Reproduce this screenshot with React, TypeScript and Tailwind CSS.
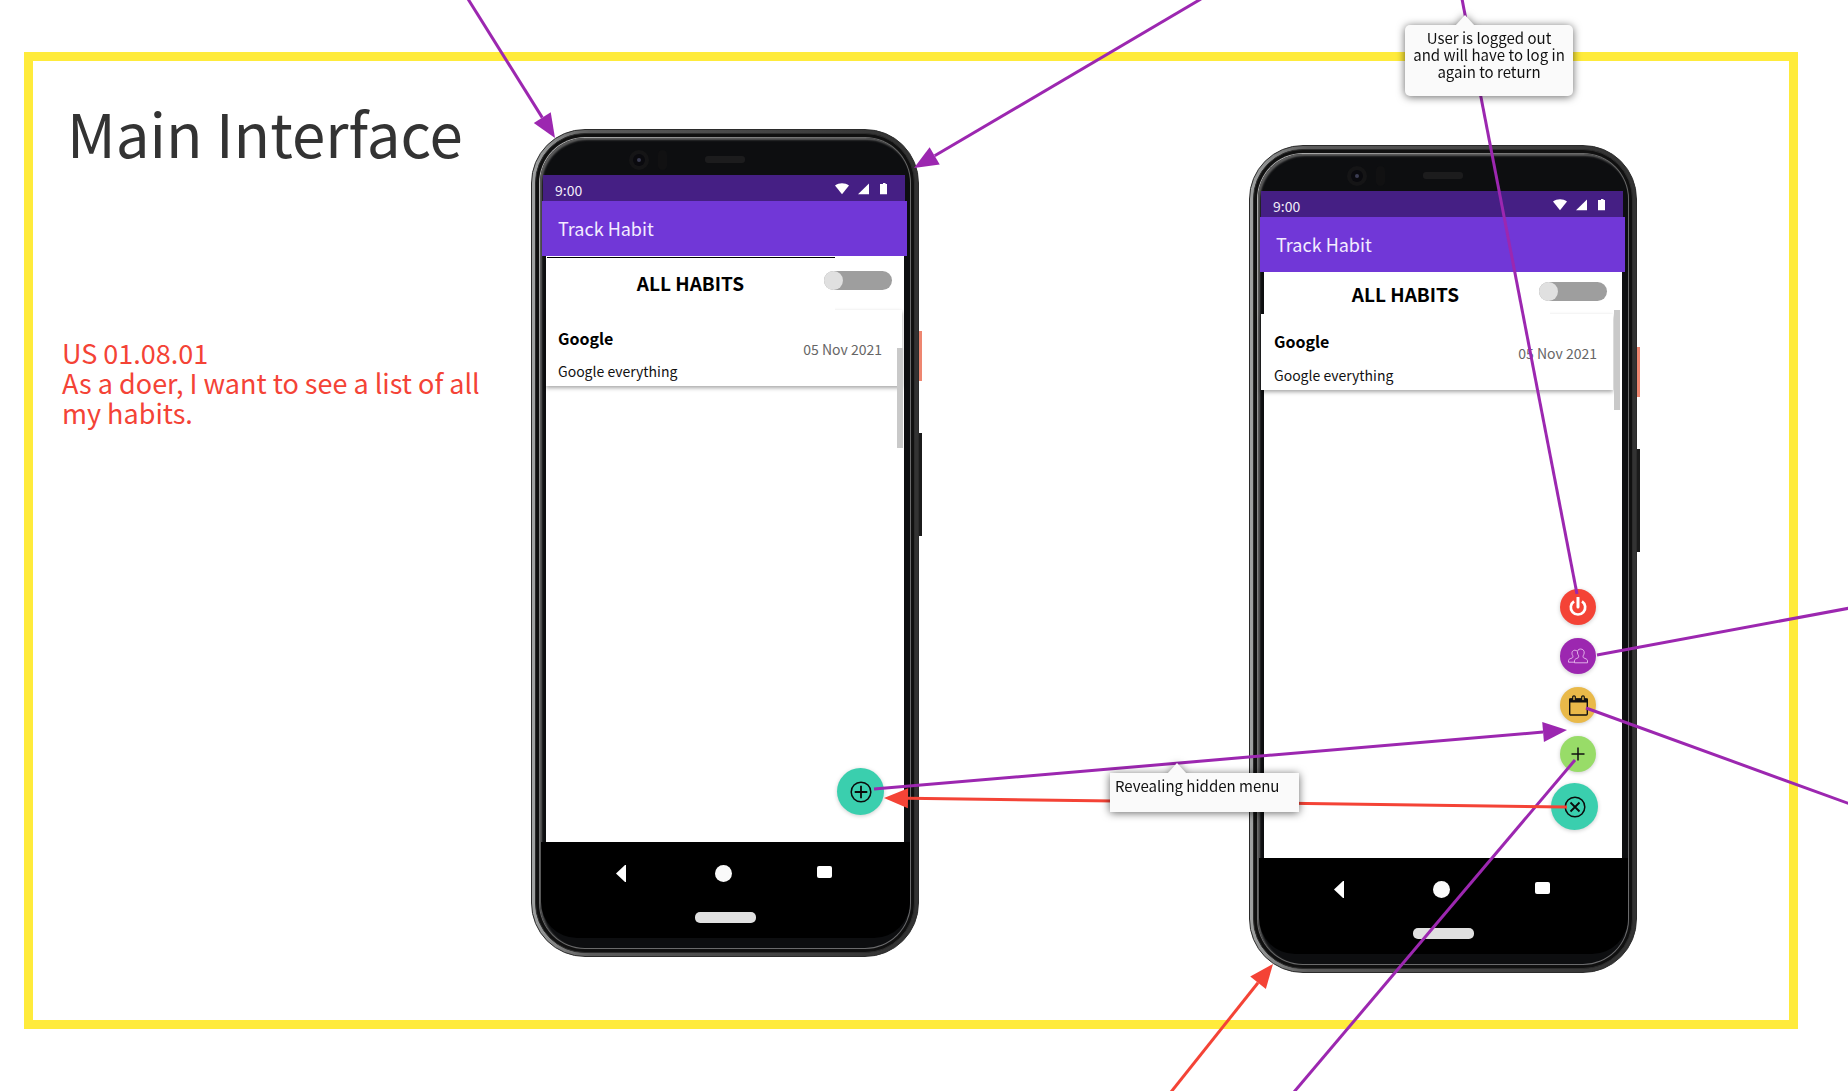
import type { ReactNode } from "react";

const PURPLE = "#9c27b0";
const RED = "#f44336";

type Point = [number, number];

type Connector = {
  from: Point;
  to: Point;
  color: string;
  head?: boolean;
};

const connectors: Connector[] = [
  { from: [468, -1], to: [555, 138], color: PURPLE, head: true },
  { from: [1201, -1], to: [914, 168], color: PURPLE, head: true },
  { from: [1462, -1], to: [1577, 594], color: PURPLE },
  { from: [1597, 655], to: [1850, 608], color: PURPLE },
  { from: [1586, 708], to: [1850, 804], color: PURPLE },
  { from: [1575, 760], to: [1294, 1092], color: PURPLE },
  { from: [874, 789], to: [1567, 730], color: PURPLE, head: true },
  { from: [1567, 807], to: [884, 798], color: RED, head: true },
  { from: [1171, 1092], to: [1273, 964], color: RED, head: true },
];

function ConnectorLine({ from, to, color, head }: Connector) {
  const dx = to[0] - from[0];
  const dy = to[1] - from[1];
  const length = Math.hypot(dx, dy);
  const ux = dx / length;
  const uy = dy / length;
  const base: Point = head ? [to[0] - ux * 24, to[1] - uy * 24] : to;
  const corners = [
    to,
    [base[0] - uy * 10, base[1] + ux * 10],
    [base[0] + uy * 10, base[1] - ux * 10],
  ];
  return (
    <g>
      <line x1={from[0]} y1={from[1]} x2={base[0]} y2={base[1]} stroke={color} strokeWidth="3" />
      {head && <polygon points={corners.map((c) => c.join(",")).join(" ")} fill={color} />}
    </g>
  );
}

function StatusIcons() {
  return (
    <svg className="mt-2 h-[12px] w-[53px]" viewBox="0 0 53 12" fill="#fff" aria-hidden="true">
      <path d="M0 2.6C4 -.5 10 -.5 14 2.6L7 11.3Z" />
      <path d="M34 .5V11.3H23Z" />
      <path d="M46.5 1H48V0h2.500v1H52v10.300h-7V1Z" />
    </svg>
  );
}

function Camera() {
  return (
    <div className="flex h-[37px] items-start pt-3 pl-[89px]" aria-hidden="true">
      <div className="flex size-5 items-center justify-center rounded-full bg-[#151516]">
        <div className="flex size-3 items-center justify-center rounded-full bg-[#0a0a0e]">
          <div className="size-1 rounded-full bg-[#3b3d52]" />
        </div>
      </div>
      <div className="ml-[9px] h-5 w-[9px] rounded-full bg-[#111112]" />
      <div className="mt-[6px] ml-[38px] h-[7px] w-10 rounded-[3px] bg-[#1c1c1d]" />
    </div>
  );
}

function NavBar() {
  return (
    <div className="ml-px h-[96px] rounded-b-[36px] bg-black pt-[23px]">
      <div className="mx-auto grid w-[306px] grid-cols-3 items-center justify-items-center pr-[4px]">
        <button type="button" aria-label="Back" className="mr-[3px] block">
          <svg className="h-[17px] w-[10px]" viewBox="0 0 10 17" fill="#fff">
            <path d="M10 0V17H9L0 8.500L9 0Z" />
          </svg>
        </button>
        <button type="button" aria-label="Home" className="size-[17px] rounded-full bg-[#fafafa]" />
        <button type="button" aria-label="Recent apps" className="mb-[3px] h-3 w-[15px] rounded-xs bg-white" />
      </div>
      <div className="mx-auto mt-[30px] h-[11px] w-[61px] rounded-[5px] bg-[#e0e0e0]" />
    </div>
  );
}

type PhoneProps = {
  id: string;
  place: string;
  headerClass: string;
  titleClass: string;
  toggleClass: string;
  cardClass: string;
  copyClass: string;
  scrollbarClass: string;
  hairline?: boolean;
  children: ReactNode;
};

function Phone({
  id,
  place,
  headerClass,
  titleClass,
  toggleClass,
  cardClass,
  copyClass,
  scrollbarClass,
  hairline,
  children,
}: PhoneProps) {
  return (
    <article className={`absolute isolate w-[388px] ${place}`}>
      <div className="absolute top-[202px] -right-[3px] h-[50px] w-2 bg-[#ee8670]" />
      <div className="absolute top-[304px] -right-[3px] h-[103px] w-2 bg-[#1b1b1b]" />
      <div className="relative rounded-[54px] border border-[#2b2b2b] bg-linear-to-r from-[#a0a2a2] via-[#5c5c5c] via-15% to-[#333] to-95% p-[3px]">
        <div className="rounded-[50px] border border-[#2c2c2c] bg-[#101010] p-[3px]">
          <div className="rounded-[46px] bg-linear-to-br from-[#b5b5b5] via-[#6a6a6a] via-40% to-[#6b6b6d] p-px">
            <div className="rounded-[45px] bg-[#0d0e10] pb-[10px] shadow-[inset_2px_2px_2px_#5d5d5d]">
              <Camera />
              <div className="mr-[5px] ml-[3px] flex h-[26px] justify-between bg-[#451f84] pr-[17px] pl-3">
                <span className="pt-[5px] text-[14px] leading-5 text-[#f1ecf8]">9:00</span>
                <StatusIcons />
              </div>
              <div className="mr-[3px] ml-[2px] flex h-[55px] items-center bg-[#7137d7] pb-px pl-4">
                <h2 className="text-[18px] leading-6 text-[#f3ecff]">Track Habit</h2>
              </div>
              <div className="relative mr-[6px] ml-[6px] h-[586px] bg-white">
                <div className={`flex items-start ${headerClass}`}>
                  <h3
                    className={`relative z-10 self-stretch bg-white text-center text-[19px] leading-6 font-bold text-black ${titleClass}`}
                  >
                    {hairline && <span className="absolute top-px left-px h-px w-[288px] bg-black" />}
                    <label htmlFor={id}>ALL HABITS</label>
                  </h3>
                  <input
                    id={id}
                    type="checkbox"
                    role="switch"
                    className={`relative z-10 -ml-[11px] h-[19px] w-[68px] appearance-none rounded-full bg-[#9e9e9e] before:block before:size-[19px] before:rounded-full before:bg-[#e0e0e0] checked:before:ml-auto ${toggleClass}`}
                  />
                </div>
                <div
                  className={`flex items-start justify-between bg-white pb-[5px] shadow-[0_2px_4px_rgba(0,0,0,0.35)] ${cardClass}`}
                >
                  <div className={`flex flex-col ${copyClass}`}>
                    <h4 className="text-[16px] leading-6 font-bold text-black">Google</h4>
                    <p className="text-[14px] leading-5 text-[#111]">Google everything</p>
                  </div>
                  <time dateTime="2021-11-05" className="pt-[29px] text-[14px] leading-5 text-[#666]">
                    05 Nov 2021
                  </time>
                </div>
                <div className={`absolute h-[100px] w-[6px] bg-[#c9c9c9] ${scrollbarClass}`} />
                {children}
              </div>
              <NavBar />
            </div>
          </div>
        </div>
      </div>
    </article>
  );
}

function RoundButton({ label, className, children }: { label: string; className: string; children: ReactNode }) {
  return (
    <button
      type="button"
      aria-label={label}
      className={`flex items-center justify-center rounded-full shadow-[0_1px_4px_rgba(0,0,0,0.2)] ${className}`}
    >
      {children}
    </button>
  );
}

function PowerIcon() {
  return (
    <svg className="size-5" viewBox="0 0 20 20" fill="none" stroke="#fff" strokeWidth="2.700" aria-hidden="true">
      <path d="M6 4.300A7.200 7.200 0 1 0 14 4.300" />
      <path d="M10 .8V10" strokeWidth="3" strokeLinecap="round" />
    </svg>
  );
}

function PeopleIcon() {
  return (
    <svg className="size-5" viewBox="0 0 20 20" fill="none" stroke="#e6bdec" strokeWidth=".9" aria-hidden="true">
      <path d="M12.500 3c-2.300 0-3.400 1.700-3 4 .1 1 .5 1.600.9 2.200.5 1.200.2 2.200-.3 2.600-1.800.9-3.600 1.200-3.600 3v2H19.500v-2c0-1.800-2.200-2.100-3.900-3-.6-.5-.8-1.400-.2-2.600.5-.7.700-1.300.8-2.200.3-2.400-1.400-4-3.700-4Z" />
      <path d="M9 5C6.500 3.300 3.700 4.700 4 7.500c0 1 .3 1.500.7 2 .4 1.200.2 2-.4 2.400C2.500 12.700.5 13 .5 14.500v1.700h6" />
    </svg>
  );
}

function CalendarIcon() {
  return (
    <svg className="h-[21px] w-[19px]" viewBox="0 0 19 21" aria-hidden="true">
      <rect x=".7" y="4" width="17.600" height="16" rx="1" fill="none" stroke="#111" strokeWidth="1.400" />
      <path d="M.2 3.500H18.800V7.500H.2Z" fill="#111" />
      <rect x="3.700" y=".8" width="2.600" height="5" rx="1.200" fill="#e9b949" stroke="#111" strokeWidth="1.200" />
      <rect x="12.700" y=".8" width="2.600" height="5" rx="1.200" fill="#e9b949" stroke="#111" strokeWidth="1.200" />
    </svg>
  );
}

function PlusIcon() {
  return (
    <svg className="size-[14px]" viewBox="0 0 14 14" stroke="#111" strokeWidth="1.500" aria-hidden="true">
      <path d="M7 .5V13.500M.5 7H13.500" />
    </svg>
  );
}

function CircledIcon({ mark }: { mark: "plus" | "cross" }) {
  return (
    <svg className="size-[22px]" viewBox="0 0 22 22" fill="none" stroke="#0b0b0b" strokeWidth="1.500" aria-hidden="true">
      <circle cx="11" cy="11" r="9.800" />
      <path
        strokeWidth="1.800"
        d={mark === "plus" ? "M11 4.700V17.300M4.700 11H17.300" : "M6.500 6.500L15.500 15.500M15.500 6.500L6.500 15.500"}
      />
    </svg>
  );
}

export default function App() {
  return (
    <div className="relative min-h-[1091px] overflow-hidden bg-white pt-[52px] pr-[50px] pl-6 font-['Noto_Sans_CJK_SC','Noto_Sans',sans-serif]">
      <main className="h-[977px] border-9 border-[#ffeb3b] pt-[35px] pl-[29px]">
        <h1 className="pl-[5px] text-[60px] leading-[72px] text-[#333]">Main Interface</h1>
        <p className="mt-[170px] w-[430px] text-[27px] leading-[30px] text-[#f44336]">
          US 01.08.01
          <br />
          As a doer, I want to see a list of all my habits.
        </p>
      </main>

      <Phone
        id="all-habits"
        place="top-[129px] left-[531px]"
        headerClass="h-[54px]"
        titleClass="w-[289px] pt-[15px]"
        toggleClass="mt-[15px]"
        cardClass="w-[356px] pl-3 pr-5"
        copyClass="gap-[11px] pt-4"
        scrollbarClass="top-[92px] right-px"
        hairline
      >
        <div className="absolute right-5 bottom-[27px]">
          <RoundButton label="Open menu" className="size-[47px] bg-[#3acfae]">
            <CircledIcon mark="plus" />
          </RoundButton>
        </div>
      </Phone>

      <Phone
        id="all-habits-menu"
        place="top-[145px] left-[1249px]"
        headerClass="h-[42px]"
        titleClass="w-[286px] pt-[10px] pr-[3px]"
        toggleClass="mt-[10px]"
        cardClass="-ml-[3px] w-[352px] pl-[13px] pr-4"
        copyClass="gap-3 pt-[15px]"
        scrollbarClass="top-[38px] right-[2px]"
      >
        <div className="absolute right-6 bottom-7 flex flex-col items-end gap-[11px]">
          <div className="flex flex-col gap-[13px] pr-[2px]">
            <RoundButton label="Log out" className="size-9 bg-[#f44336]">
              <PowerIcon />
            </RoundButton>
            <RoundButton label="Friends" className="size-9 bg-[#9c27b0]">
              <PeopleIcon />
            </RoundButton>
            <RoundButton label="Calendar" className="size-9 bg-[#e9b949]">
              <CalendarIcon />
            </RoundButton>
            <RoundButton label="Add habit" className="size-9 bg-[#98dc68]">
              <PlusIcon />
            </RoundButton>
          </div>
          <RoundButton label="Close menu" className="size-[47px] bg-[#3acfae]">
            <CircledIcon mark="cross" />
          </RoundButton>
        </div>
      </Phone>

      <svg
        className="pointer-events-none absolute top-0 left-0 h-[1091px] w-[1848px] overflow-visible"
        viewBox="0 0 1848 1091"
        aria-hidden="true"
      >
        {connectors.map((c) => (
          <ConnectorLine key={c.from.join()} {...c} />
        ))}
      </svg>

      <aside className="absolute top-[25px] left-[1405px] h-[71px] w-[168px] rounded-[5px] bg-[#fafafa] pt-1 text-center text-[15px] leading-[17px] text-[#111] drop-shadow-[0_1px_4px_rgba(0,0,0,0.6)]">
        <svg className="absolute -top-[10px] left-[50px] h-[11px] w-5" viewBox="0 0 20 11" fill="#fafafa" aria-hidden="true">
          <path d="M10 0L20 11H0Z" />
        </svg>
        User is logged out
        <br />
        and will have to log in
        <br />
        again to return
      </aside>

      <aside className="absolute top-[773px] left-[1110px] h-[39px] w-[189px] bg-[#fafafa] pt-1 pl-[5px] text-[15px] leading-[17px] text-[#111] drop-shadow-[0_1px_4px_rgba(0,0,0,0.6)]">
        <svg className="absolute -top-[10px] left-[57px] h-[11px] w-5" viewBox="0 0 20 11" fill="#fafafa" aria-hidden="true">
          <path d="M10 0L20 11H0Z" />
        </svg>
        Revealing hidden menu
      </aside>
    </div>
  );
}
